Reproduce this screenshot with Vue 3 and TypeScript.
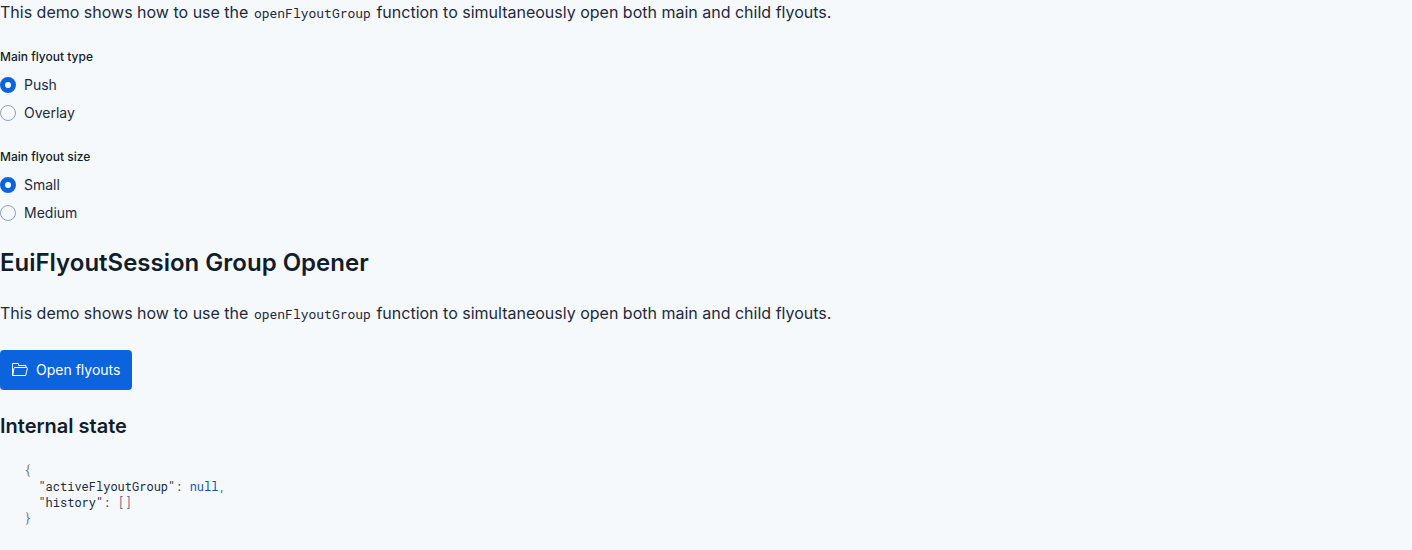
<script setup lang="ts">
import { ref } from 'vue'

interface Option {
  id: string
  label: string
}

const types: Option[] = [
  { id: 'push', label: 'Push' },
  { id: 'overlay', label: 'Overlay' },
]
const sizes: Option[] = [
  { id: 's', label: 'Small' },
  { id: 'm', label: 'Medium' },
]
const flyoutType = ref('push')
const flyoutSize = ref('s')
</script>

<template>
  <main class="page">
    <p class="text">
      This demo shows how to use the <code>openFlyoutGroup</code> function to simultaneously open both main and child flyouts.
    </p>

    <fieldset class="group">
      <legend>Main flyout type</legend>
      <label v-for="o in types" :key="o.id" class="radio">
        <input v-model="flyoutType" type="radio" name="flyout-type" :value="o.id" />
        <span>{{ o.label }}</span>
      </label>
    </fieldset>

    <fieldset class="group">
      <legend>Main flyout size</legend>
      <label v-for="o in sizes" :key="o.id" class="radio">
        <input v-model="flyoutSize" type="radio" name="flyout-size" :value="o.id" />
        <span>{{ o.label }}</span>
      </label>
    </fieldset>

    <h2>EuiFlyoutSession Group Opener</h2>
    <p class="text">
      This demo shows how to use the <code>openFlyoutGroup</code> function to simultaneously open both main and child flyouts.
    </p>

    <button type="button" class="open">
      <svg width="16" height="16" viewBox="0 0 16 16" fill="none" stroke="currentColor" aria-hidden="true">
        <path d="M.5 13.5v-12h6v2h7.500v2" />
        <path d="M.5 13.500h13.200l1.800-7.500-.5-.5H2.500l-.5.500L.700 13.500" />
      </svg>
      <span>Open flyouts</span>
    </button>

    <h3>Internal state</h3>
    <pre class="state"><code><span class="punct">{</span>
  <span class="key">"activeFlyoutGroup"</span><span class="colon">:</span> <span class="keyword">null</span><span class="punct">,</span>
  <span class="key">"history"</span><span class="colon">:</span> <span class="punct">[]</span>
<span class="punct">}</span></code></pre>
  </main>
</template>

<style>
html {
  background: #f6f9fc;
}
</style>

<style scoped>
.page {
  display: flex;
  flex-direction: column;
  align-items: flex-start;
  color: #1d2a3e;
  font-family: Inter, sans-serif;
  font-size: 14px;
}
.text {
  margin: 0;
  font-size: 16px;
  line-height: 24px;
}
code {
  font-family: "Roboto Mono", "DejaVu Sans Mono", monospace;
}
.text code {
  margin: 0 1px;
  font-size: 13px;
}
.group {
  display: flex;
  flex-direction: column;
  margin: 24px 0 0;
  padding: 0 0 2px;
  border: 0;
  gap: 8px;
}
legend {
  margin-bottom: 10px;
  padding: 0;
  color: #111c2c;
  font-size: 12px;
  font-weight: 500;
  line-height: 16px;
}
.radio {
  display: flex;
  align-items: center;
  gap: 8px;
  line-height: 20px;
}
.radio input {
  appearance: none;
  width: 16px;
  height: 16px;
  margin: 0;
  border: 1px solid #8ea0bf;
  border-radius: 50%;
  background: #f6f9fc;
}
.radio input:checked {
  border: 5px solid #0b64dd;
  background: #ffffff;
}
h2,
h3 {
  margin: 24px 0;
  color: #111c2c;
  font-weight: 600;
}
h2 {
  font-size: 24px;
  line-height: 28px;
}
h3 {
  font-size: 20px;
  line-height: 24px;
}
.open {
  display: inline-flex;
  align-items: center;
  gap: 8px;
  height: 40px;
  margin-top: 24px;
  padding: 0 12px;
  border: 0;
  border-radius: 4px;
  background: #0b64dd;
  color: #ffffff;
  font: 400 14px/20px Inter, sans-serif;
}
.state {
  margin: 0;
  padding: 0 24px;
  font-family: "Roboto Mono", "DejaVu Sans Mono", monospace;
  font-size: 12px;
  line-height: 16px;
}
.state code {
  font-size: 12px;
}
.punct {
  color: #6a7385;
}
.colon {
  color: #3f4a5c;
}
.keyword {
  color: #1750ba;
}
</style>
